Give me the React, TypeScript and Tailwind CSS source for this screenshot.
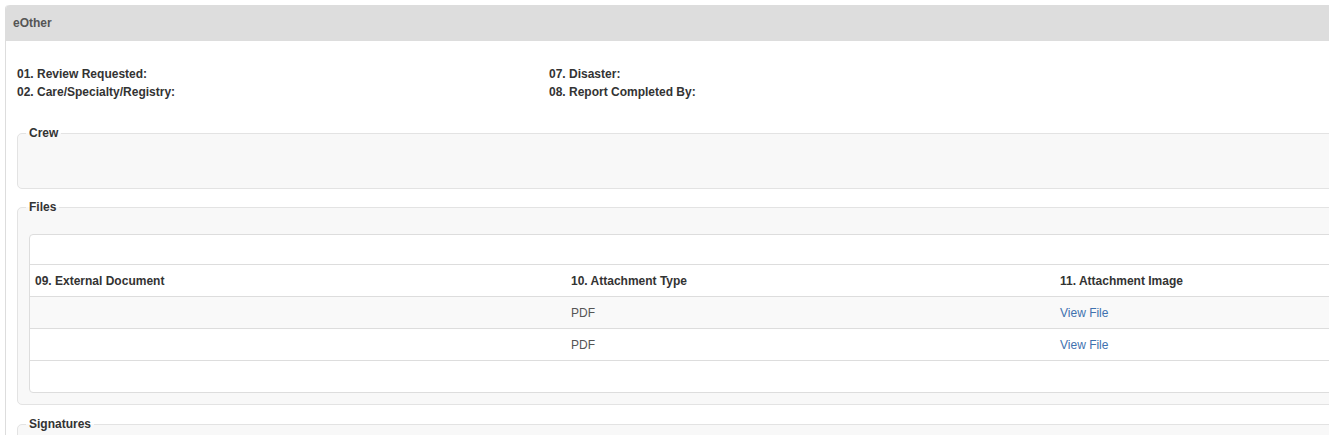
import React from 'react'

type FileRow = { doc: string; type: string; link: string }

const files: FileRow[] = [
  { doc: '', type: 'PDF', link: 'View File' },
  { doc: '', type: 'PDF', link: 'View File' }
]

function Section({
  title,
  children,
  className = ''
}: {
  title: string
  children?: React.ReactNode
  className?: string
}): React.JSX.Element {
  return (
    <fieldset
      className={`rounded-[5px] border border-[#e3e3e3] bg-[#f8f8f8] pl-[8px] ${className}`}
    >
      <legend className="px-[3px] text-[12px] font-bold leading-[18px] text-[#333]">
        {title}
      </legend>
      {children}
    </fieldset>
  )
}

export default function App(): React.JSX.Element {
  return (
    <div className="h-[435px] w-[1329px] overflow-hidden bg-white font-['Liberation_Sans',Arial,sans-serif] text-[12px] text-[#333]">
      <div className="ml-[5px] mt-[5px] w-[1400px] rounded-tl-[4px] border-l border-[#ddd]">
        <div className="flex h-[36px] items-center rounded-tl-[4px] bg-[#ddd] px-[7px] font-bold text-[#555]">
          eOther
        </div>

        <div className="pl-[11px] pt-[24px]">
          <div className="grid grid-cols-[532px_1fr] font-bold leading-[18px]">
            <div>01. Review Requested:</div>
            <div>07. Disaster:</div>
            <div>02. Care/Specialty/Registry:</div>
            <div>08. Report Completed By:</div>
          </div>

          <Section title="Crew" className="mt-[23px]">
            <div className="h-[46px]" />
          </Section>

          <Section title="Files" className="mt-[9px] pb-[11px]">
            <div className="ml-[3px] mt-[18px] rounded-[4px] border border-[#ddd] bg-white">
              <div className="h-[30px] border-b border-[#ddd]" />
              <div className="grid h-[32px] grid-cols-[536px_489px_1fr] items-center border-b border-[#ddd] font-bold">
                <div className="px-[5px]">09. External Document</div>
                <div className="px-[5px]">10. Attachment Type</div>
                <div className="px-[5px]">11. Attachment Image</div>
              </div>
              {files.map((f, i) => (
                <div
                  key={i}
                  className={`grid h-[32px] grid-cols-[536px_489px_1fr] items-center border-b border-[#ddd] ${
                    i % 2 === 0 ? 'bg-[#f9f9f9]' : 'bg-white'
                  }`}
                >
                  <div className="px-[5px]">{f.doc}</div>
                  <div className="px-[5px] text-[#555]">{f.type}</div>
                  <div className="px-[5px]">
                    <a href="#" className="text-[#3f72af]">
                      {f.link}
                    </a>
                  </div>
                </div>
              ))}
              <div className="h-[31px]" />
            </div>
          </Section>

          <Section title="Signatures" className="mt-[10px]">
            <div className="h-[40px]" />
          </Section>
        </div>
      </div>
    </div>
  )
}
